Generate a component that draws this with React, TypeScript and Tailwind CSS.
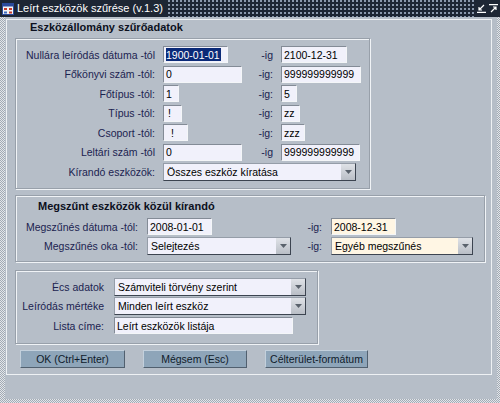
import React from "react";

const LABEL = "text-[10.5px] leading-none text-[#1b2350] whitespace-nowrap";

function Field({
  w,
  value,
  cream = false,
  selected = false,
  pad = "pl-[2px]",
}: {
  w: string;
  value: string;
  cream?: boolean;
  selected?: boolean;
  pad?: string;
}) {
  return (
    <div
      className={`${w} h-[17px] flex items-center ${pad} border border-t-[#838b96] border-l-[#838b96] border-b-[#f4f6f8] border-r-[#f4f6f8] ${
        cream ? "bg-[#fff6e4]" : "bg-[#f1f1fb]"
      } text-[10.5px] leading-none text-black whitespace-pre overflow-hidden`}
    >
      {selected ? (
        <span className="bg-[#0b2a78] text-white h-[13px] flex items-center pr-[1px]">{value}</span>
      ) : (
        value
      )}
    </div>
  );
}

function Select({ w, value, cream = false }: { w: string; value: string; cream?: boolean }) {
  return (
    <div
      className={`${w} h-[18px] flex border border-t-[#959da8] border-l-[#959da8] border-b-[#3c4450] border-r-[#3c4450] ${
        cream ? "bg-[#fff6e4]" : "bg-[#f1f1fb]"
      }`}
    >
      <div className="flex-1 flex items-center pl-[3px] text-[10.5px] leading-none text-black whitespace-nowrap overflow-hidden">
        {value}
      </div>
      <div className="w-[14px] flex items-center justify-center bg-[linear-gradient(#dfe2e7,#b9bec6)]">
        <svg width="7" height="4" viewBox="0 0 7 4">
          <path d="M0 0h7L3.5 4z" fill="#5a626c" />
        </svg>
      </div>
    </div>
  );
}

function Button({ label, w }: { label: string; w: string }) {
  return (
    <div
      className={`${w} h-[18px] flex items-center justify-center bg-[#8ea5b9] border border-t-[#c3d0dc] border-l-[#c3d0dc] border-b-[#51606f] border-r-[#51606f] text-[10.5px] leading-none text-[#0f1b2b] whitespace-nowrap`}
    >
      {label}
    </div>
  );
}

const GROUP =
  "box-border border border-[#98a0aa] shadow-[inset_1px_1px_0_#f0f3f6,1px_1px_0_#f0f3f6]";

function TitleIcon() {
  return (
    <svg width="12" height="12" viewBox="0 0 12 12">
      <rect x="0.5" y="0.5" width="11" height="11" fill="#f4f4f4" stroke="#2b4a9a" />
      <rect x="1" y="1" width="10" height="2.5" fill="#2b4a9a" />
      <rect x="2" y="5" width="3" height="2" fill="#c83a2a" />
      <rect x="7" y="5" width="3" height="2" fill="#c83a2a" />
      <rect x="2" y="8.5" width="3" height="2" fill="#3a6ac0" />
      <rect x="7" y="8.5" width="3" height="2" fill="#c83a2a" />
    </svg>
  );
}

export default function App() {
  return (
    <div className="w-[500px] h-[403px] flex flex-col overflow-hidden font-['Liberation_Sans',Arial,sans-serif]">
      {/* title bar */}
      <div className="h-[17px] flex items-center bg-[#1d2634] bg-[image:radial-gradient(circle_at_1px_1px,#8a98ac_1px,transparent_1px)] bg-[length:4px_4px]">
        <div className="h-full flex items-center gap-[3px] bg-[#1d2634] pl-[2px] pr-[4px]">
          <TitleIcon />
          <span className="text-[11px] leading-none text-white whitespace-nowrap">
            Leírt eszközök szűrése (v.1.3)
          </span>
        </div>
        <div className="ml-auto h-full flex items-center gap-[3px] bg-[#1d2634] pl-[3px] pr-[2px]">
          <svg width="9" height="9" viewBox="0 0 9 9" fill="none" stroke="#ffffff" strokeWidth="1.2">
            <path d="M7 1L2 6M2 3v3h3M0 8.4h9" />
          </svg>
          <svg width="9" height="9" viewBox="0 0 9 9" fill="none" stroke="#ffffff" strokeWidth="1.2">
            <path d="M2 8l5-5M4 3h3v3M0 0.6h9" />
          </svg>
        </div>
      </div>

      {/* body with dotted edge */}
      <div className="flex-1 flex pl-[5px] pr-[3px] pb-[4px] bg-[image:repeating-conic-gradient(#a2aab4_0%_25%,#e2e6ea_0%_50%)] bg-[length:2px_2px]">
        <div className="flex-1 bg-[#b6bec8] pt-[2px] pl-[1px]">
          <div className="w-[486px] h-[356px] box-border border border-[#eef1f4] flex flex-col">
            <div className="h-[14px] pl-[23px] flex items-center text-[11px] font-bold leading-none text-[#0c1020] whitespace-nowrap">
              Eszközállomány szűrőadatok
            </div>

            {/* group 1 */}
            <div className={`${GROUP} mt-[4px] ml-[8px] w-[355px] h-[151px] pt-[6px]`}>
              <div className="grid grid-cols-[147px_84px_34px_1fr] auto-rows-[19.5px] items-center">
                <div className={`${LABEL} text-right pr-[8px]`}>Nullára leíródás dátuma -tól</div>
                <Field w="w-[65px]" value="1900-01-01" selected />
                <div className={`${LABEL} text-right pr-[8px]`}>-ig</div>
                <Field w="w-[66px]" value="2100-12-31" />

                <div className={`${LABEL} text-right pr-[8px]`}>Főkönyvi szám -tól:</div>
                <Field w="w-[79px]" value="0" />
                <div className={`${LABEL} text-right pr-[8px]`}>-ig:</div>
                <Field w="w-[80px]" value="999999999999" />

                <div className={`${LABEL} text-right pr-[8px]`}>Főtípus -tól:</div>
                <Field w="w-[16px]" value="1" />
                <div className={`${LABEL} text-right pr-[8px]`}>-ig:</div>
                <Field w="w-[16px]" value="5" />

                <div className={`${LABEL} text-right pr-[8px]`}>Típus -tól:</div>
                <Field w="w-[19px]" value="!" pad="pl-[4px]" />
                <div className={`${LABEL} text-right pr-[8px]`}>-ig:</div>
                <Field w="w-[19px]" value="zz" />

                <div className={`${LABEL} text-right pr-[8px]`}>Csoport -tól:</div>
                <Field w="w-[25px]" value="!" pad="pl-[7px]" />
                <div className={`${LABEL} text-right pr-[8px]`}>-ig:</div>
                <Field w="w-[24px]" value="zzz" />

                <div className={`${LABEL} text-right pr-[8px]`}>Leltári szám -tól</div>
                <Field w="w-[79px]" value="0" />
                <div className={`${LABEL} text-right pr-[8px]`}>-ig</div>
                <Field w="w-[79px]" value="999999999999" />

                <div className={`${LABEL} text-right pr-[8px]`}>Kírandó eszközök:</div>
                <div className="col-span-3">
                  <Select w="w-[193px]" value="Összes eszköz kíratása" />
                </div>
              </div>
            </div>

            {/* group 2 */}
            <div className={`${GROUP} mt-[6px] ml-[8px] w-[470px] h-[67px] pt-[3px]`}>
              <div className="h-[14px] pl-[22px] flex items-center text-[11px] font-bold leading-none text-[#0c1020] whitespace-nowrap">
                Megszűnt eszközök közül kírandó
              </div>
              <div className="mt-[4px] grid grid-cols-[131px_146px_38px_1fr] auto-rows-[19.5px] items-center">
                <div className={`${LABEL} text-right pr-[9px]`}>Megszűnés dátuma -tól:</div>
                <Field w="w-[65px]" value="2008-01-01" />
                <div className={`${LABEL} text-right pr-[9px]`}>-ig:</div>
                <Field w="w-[65px]" value="2008-12-31" cream />

                <div className={`${LABEL} text-right pr-[9px]`}>Megszűnés oka -tól:</div>
                <Select w="w-[144px]" value="Selejtezés" />
                <div className={`${LABEL} text-right pr-[9px]`}>-ig:</div>
                <Select w="w-[142px]" value="Egyéb megszűnés" cream />
              </div>
            </div>

            {/* group 3 */}
            <div className={`${GROUP} mt-[8px] ml-[8px] w-[303px] h-[74px] pt-[6px]`}>
              <div className="grid grid-cols-[98px_1fr] auto-rows-[19.5px] items-center">
                <div className={`${LABEL} text-right pr-[10px]`}>Écs adatok</div>
                <Select w="w-[192px]" value="Számviteli törvény szerint" />

                <div className={`${LABEL} text-right pr-[10px]`}>Leíródás mértéke</div>
                <Select w="w-[192px]" value="Minden leírt eszköz" />

                <div className={`${LABEL} text-right pr-[10px]`}>Lista címe:</div>
                <Field w="w-[179px]" value="Leírt eszközök listája" />
              </div>
            </div>

            {/* buttons */}
            <div className="mt-[6px] ml-[13px] flex gap-[18px]">
              <Button w="w-[105px]" label="OK (Ctrl+Enter)" />
              <Button w="w-[104px]" label="Mégsem (Esc)" />
              <Button w="w-[103px]" label="Célterület-formátum" />
            </div>
          </div>
        </div>
      </div>
    </div>
  );
}
